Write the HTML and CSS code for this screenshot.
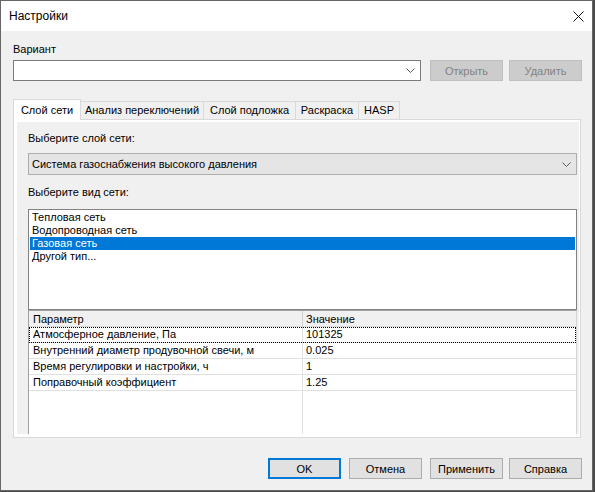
FILE: index.html
```html
<!DOCTYPE html>
<html lang="ru">
<head>
<meta charset="utf-8">
<title>Настройки</title>
<link rel="stylesheet" href="styles.css">
</head>
<body>
<div class="window">
  <div class="titlebar">
    <span class="title">Настройки</span>
    <svg class="close" width="11" height="11" viewBox="0 0 11 11"><path d="M0.5 0.5L10.5 10.5M10.5 0.5L0.5 10.5" stroke="#111" stroke-width="1" fill="none"/></svg>
  </div>
  <div class="content">
    <div class="label">Вариант</div>
    <div class="variant-row">
      <div class="combo-edit">
        <svg class="chev" width="9" height="5" viewBox="0 0 9 5"><path d="M0.5 0.5L4.5 4.5L8.5 0.5" stroke="#5a5a5a" fill="none"/></svg>
      </div>
      <button class="btn btn-open" disabled>Открыть</button>
      <button class="btn btn-del" disabled>Удалить</button>
    </div>
    <div class="tabs">
      <div class="tab tab-active t1">Слой сети</div>
      <div class="tab t2">Анализ переключений</div>
      <div class="tab t3">Слой подложка</div>
      <div class="tab t4">Раскраска</div>
      <div class="tab t5">HASP</div>
    </div>
    <div class="tabframe">
      <div class="tabpage">
        <div class="label">Выберите слой сети:</div>
        <div class="combo-list">
          <span>Система газоснабжения высокого давления</span>
          <svg class="chev" width="9" height="5" viewBox="0 0 9 5"><path d="M0.5 0.5L4.5 4.5L8.5 0.5" stroke="#5a5a5a" fill="none"/></svg>
        </div>
        <div class="label label-gap">Выберите вид сети:</div>
        <div class="listbox">
          <div class="item">Тепловая сеть</div>
          <div class="item">Водопроводная сеть</div>
          <div class="item item-selected">Газовая сеть</div>
          <div class="item">Другой тип...</div>
        </div>
        <div class="grid">
          <div class="grow ghead"><div class="cell c1">Параметр</div><div class="cell c2">Значение</div></div>
          <div class="grow gfocus"><div class="cell c1">Атмосферное давление, Па</div><div class="cell c2">101325</div></div>
          <div class="grow"><div class="cell c1">Внутренний диаметр продувочной свечи, м</div><div class="cell c2">0.025</div></div>
          <div class="grow"><div class="cell c1">Время регулировки и настройки, ч</div><div class="cell c2">1</div></div>
          <div class="grow"><div class="cell c1">Поправочный коэффициент</div><div class="cell c2">1.25</div></div>
          <div class="gfill"><div class="cell c1"></div><div class="cell c2"></div></div>
        </div>
      </div>
    </div>
    <div class="footer">
      <button class="btn btn-ok">OK</button>
      <button class="btn">Отмена</button>
      <button class="btn">Применить</button>
      <button class="btn btn-last">Справка</button>
    </div>
  </div>
</div>
</body>
</html>
```
FILE: styles.css
```css
* { box-sizing: border-box; }

body {
  margin: 0;
  background: #4a4a4a;
  font-family: "Liberation Sans", Arial, sans-serif;
  font-size: 11px;
  color: #000;
}

.window {
  width: 593px;
  height: 491px;
  border: 1px solid #666;
  background: #f0f0f0;
  display: flex;
  flex-direction: column;
}

.titlebar {
  height: 30px;
  flex: none;
  background: #fff;
  display: flex;
  align-items: center;
  justify-content: space-between;
  padding: 0 8px 0 8px;
}

.title {
  font-size: 12px;
  line-height: 15px;
}

.content {
  padding: 11px 10px 0 12px;
}

.label {
  height: 15px;
  line-height: 15px;
}

.variant-row {
  display: flex;
  margin-top: 3px;
  height: 21px;
}

.combo-edit {
  width: 408px;
  height: 21px;
  background: #fff;
  border: 1px solid #7a7a7a;
  display: flex;
  align-items: center;
  justify-content: flex-end;
  padding-right: 5px;
}

.btn {
  width: 73px;
  height: 21px;
  margin: 0 0 0 8px;
  padding: 0;
  border: 1px solid #adadad;
  background: #e1e1e1;
  font-family: inherit;
  font-size: 11px;
  color: #000;
}

.btn:disabled {
  background: #cccccc;
  border-color: #bfbfbf;
  color: #838383;
}

.btn-open { margin-left: 9px; }
.btn-del, .btn-last { margin-left: 6px; }

.btn-ok { border: 2px solid #0078d7; }

.tabs {
  display: flex;
  align-items: flex-end;
  height: 21px;
  margin-top: 18px;
  margin-bottom: -1px;
}

.tab {
  height: 19px;
  border: 1px solid #d9d9d9;
  background: #f0f0f0;
  line-height: 17px;
  text-align: center;
  margin-left: -1px;
  white-space: nowrap;
}

.tab-active {
  height: 21px;
  padding-top: 2px;
  background: #fff;
  border-bottom: none;
  margin-left: 0;
  position: relative;
  z-index: 1;
}

.t1 { width: 68px; }
.t2 { width: 124px; }
.t3 { width: 93px; }
.t4 { width: 64px; }
.t5 { width: 42px; }

.tabframe {
  width: 568px;
  height: 319px;
  border: 1px solid #d9d9d9;
  background: #fff;
  padding: 2px 1px 3px 3px;
  display: flex;
}

.tabpage {
  flex: 1;
  background: #f0f0f0;
  padding: 9px 2px 0 11px;
  display: flex;
  flex-direction: column;
}

.combo-list {
  margin-top: 7px;
  height: 22px;
  flex: none;
  background: #e5e5e5;
  border: 1px solid #adadad;
  display: flex;
  align-items: center;
  justify-content: space-between;
  padding: 0 5px 0 3px;
}

.label-gap { margin-top: 10px; }

.listbox {
  margin-top: 9px;
  height: 101px;
  flex: none;
  border: 1px solid #828282;
  background: #fff;
  padding: 1px;
}

.item {
  height: 13px;
  line-height: 13px;
  padding-left: 2px;
}

.item-selected {
  background: #0078d7;
  color: #fff;
}

.grid {
  height: 124px;
  flex: none;
  border-top: 1px solid #a0a0a0;
  border-left: 1px solid #a0a0a0;
  border-right: 1px solid #d4d4d4;
  background: #fff;
  display: flex;
  flex-direction: column;
}

.grow, .gfill {
  display: grid;
  grid-template-columns: 274px 1fr;
  height: 16px;
  border-bottom: 1px solid #e0e0e0;
  flex: none;
}

.gfill {
  flex: 1;
  border-bottom: none;
}

.cell {
  line-height: 15px;
  white-space: nowrap;
  overflow: hidden;
}

.c1 {
  padding-left: 4px;
  border-right: 1px solid #e0e0e0;
}

.c2 { padding-left: 3px; }

.ghead {
  background: #f0f0f0;
  border-bottom-color: #d9d9d9;
}

.ghead .cell { line-height: 16px; }
.ghead .c1 { border-right-color: #d0d0d0; }

.gfocus {
  outline: 1px dotted #000;
  outline-offset: -1px;
}

.footer {
  margin-top: 20px;
  display: flex;
  justify-content: flex-end;
}
```
